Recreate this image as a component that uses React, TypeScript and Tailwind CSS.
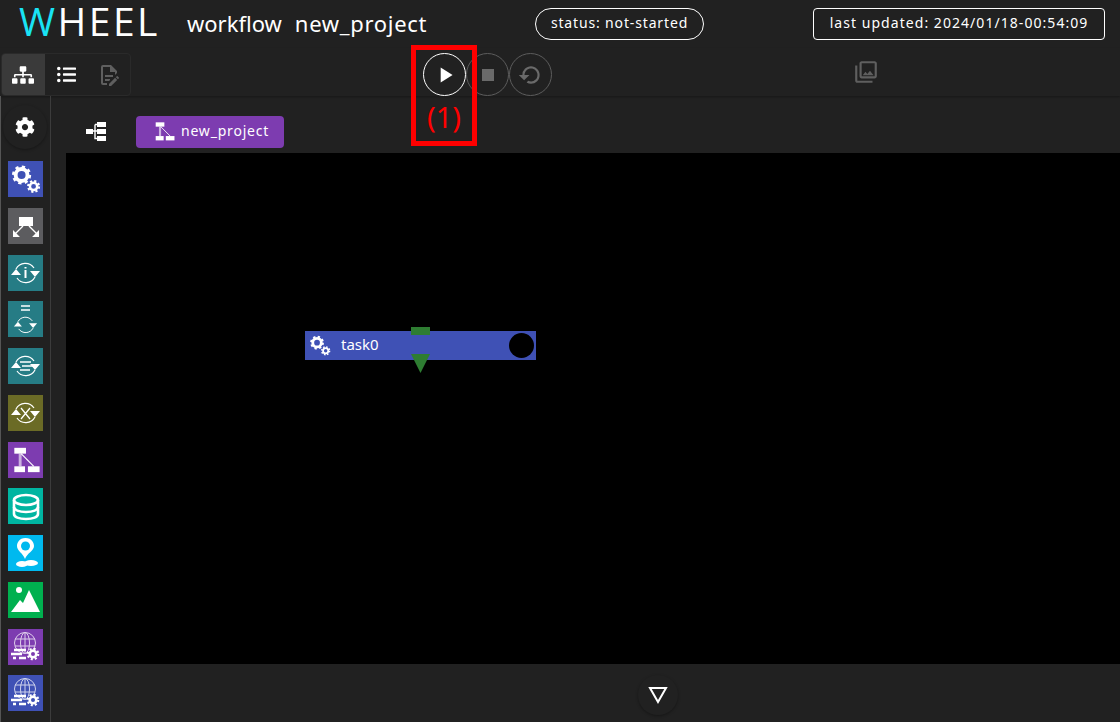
import { ReactNode } from "react"
import { FaSitemap, FaListUl, FaCog } from "react-icons/fa"
import { MdOutlinePhotoLibrary, MdRefresh, MdPlayArrow, MdStop } from "react-icons/md"

const Gears = ({ size = 32 }: { size?: number }) => (
  <svg width={size} height={size} viewBox="0 0 28 28" fill="none">
    <circle cx="11" cy="10.5" r="5.2" stroke="white" strokeWidth="3.4" />
    <circle cx="11" cy="10.5" r="7.2" stroke="white" strokeWidth="2.4" strokeDasharray="2.8 2.85" />
    <circle cx="21.5" cy="20.5" r="3.2" stroke="white" strokeWidth="2.2" />
    <circle cx="21.5" cy="20.5" r="4.8" stroke="white" strokeWidth="1.8" strokeDasharray="1.9 1.87" />
  </svg>
)

const Cycle = ({ children, small }: { children?: ReactNode; small?: boolean }) => (
  <svg width="35" height="36" viewBox="0 0 35 36" fill="none">
    <g transform={small ? "translate(3.5 9.5) scale(0.8)" : undefined}>
      <path d="M8 14 A10.5 10.5 0 0 1 26 13" stroke="white" strokeWidth="1.2" />
      <path d="M27 22 A10.5 10.5 0 0 1 9 23" stroke="white" strokeWidth="1.2" />
      <path d="M3 20 L8 14 L13 20 Z M22 16 L32 16 L27 22 Z" fill="white" />
    </g>
    {children}
  </svg>
)

const Fork = () => (
  <svg width="35" height="36" viewBox="0 0 35 36" fill="none">
    <rect x="11" y="9" width="14" height="9" fill="white" />
    <path d="M15 18 L6 27 M21 18 L30 27" stroke="white" strokeWidth="1.4" />
    <path d="M5 22 L5 29 L12 29 Z M31 22 L31 29 L24 29 Z" fill="white" />
  </svg>
)

const Workflow = ({ size = 35 }: { size?: number }) => (
  <svg width={size} height={size} viewBox="0 0 35 36" fill="none">
    <rect x="6" y="6" width="12" height="6" fill="white" />
    <rect x="6" y="25" width="11" height="6" fill="white" />
    <rect x="20" y="25" width="12" height="6" fill="white" />
    <path d="M12 12 V25" stroke="white" strokeOpacity="0.6" strokeWidth="3" />
    <path d="M13 12 L26 25" stroke="white" strokeWidth="1.2" />
  </svg>
)

const Database = () => (
  <svg width="35" height="36" viewBox="0 0 35 36" fill="none" stroke="white" strokeWidth="2.6">
    <ellipse cx="18" cy="12" rx="12" ry="5" />
    <path d="M6 12 V26 C6 29 11 31 18 31 C25 31 30 29 30 26 V12" />
    <path d="M6 19 C6 22 11 24 18 24 C25 24 30 22 30 19" />
  </svg>
)

const Pin = () => (
  <svg width="35" height="36" viewBox="0 0 35 36">
    <path d="M17.5 3 C11 3 9 8 9 11 C9 16 15 18 17 24 C19 18 26 16 26 11 C26 8 24 3 17.5 3 Z" fill="white" />
    <circle cx="17.5" cy="11" r="4.5" fill="#00b9ef" />
    <ellipse cx="14" cy="29" rx="6" ry="3" fill="white" />
    <ellipse cx="23" cy="28" rx="7" ry="3" fill="white" />
  </svg>
)

const Mountain = () => (
  <svg width="35" height="36" viewBox="0 0 35 36">
    <circle cx="11" cy="8" r="3" fill="white" />
    <path d="M3 30 L12 18 L15 21 L21 8 L32 30 Z" fill="white" />
  </svg>
)

const GlobeGear = () => (
  <svg width="35" height="36" viewBox="0 0 35 36" fill="none">
    <g stroke="white" strokeWidth="1" opacity="0.75">
      <circle cx="17" cy="14" r="10.5" />
      <ellipse cx="17" cy="14" rx="4.5" ry="10.5" />
      <path d="M17 3.5 V24.5 M7 10 H27 M7 17 H27" />
    </g>
    <path d="M6 21 H18 M3 25 H14 M5 29 H8 M11 29 H18" stroke="white" strokeWidth="2.4" />
    <circle cx="25" cy="25" r="3.3" stroke="white" strokeWidth="2.6" />
    <circle cx="25" cy="25" r="5.2" stroke="white" strokeWidth="2.2" strokeDasharray="2 2.08" />
  </svg>
)

const Tile = ({ color, children }: { color: string; children: ReactNode }) => (
  <div className={`flex h-9 w-[35px] items-center justify-center ${color}`}>{children}</div>
)

const RoundButton = ({ active, children }: { active?: boolean; children: ReactNode }) => (
  <div
    className={`flex h-[43px] w-[43px] items-center justify-center rounded-full border ${
      active ? "border-white text-white" : "border-[#5c5c5c] text-[#6a6a6a]"
    }`}
  >
    {children}
  </div>
)

export default function App() {
  return (
    <div className="relative flex h-[722px] w-[1120px] flex-col overflow-hidden bg-[#212121] font-['Noto_Sans',sans-serif] text-white">
      {/* title bar */}
      <header className="flex h-12 shrink-0 items-center">
        <div className="mb-[6px] ml-[19px] w-[168px] font-['Open_Sans',sans-serif] text-[39px] font-normal leading-[42px] tracking-[2.5px]">
          <span className="text-[#19e3f5]">W</span>
          HEEL
        </div>
        <div className="mb-[3px] flex w-[348px] gap-[13px] text-[22px] leading-[30px]">
          <span>workflow</span>
          <span className="tracking-[0.7px]">new_project</span>
        </div>
        <div className="flex h-8 w-[169px] items-center justify-center rounded-full border border-white pb-[3px] text-[14px] tracking-[0.85px]">
          status: not-started
        </div>
        <div className="ml-[109px] flex h-8 w-[292px] items-center justify-center rounded-[4px] border border-white pb-[3px] text-[14px] tracking-[1.05px]">
          last updated: 2024/01/18-00:54:09
        </div>
      </header>

      {/* toolbar */}
      <div className="flex h-12 shrink-0 items-end shadow-[0_1px_2px_rgba(0,0,0,0.3)]">
        <div className="ml-[1px] flex h-[43px] w-[130px] overflow-hidden rounded border border-[#2a2a2a]">
          <div className="flex w-[43px] items-center justify-center bg-[#3a3a3a]">
            <FaSitemap size={22} />
          </div>
          <div className="flex w-[43px] items-center justify-center">
            <FaListUl size={19} />
          </div>
          <div className="flex w-[43px] items-center justify-center text-[#5f5f5f]">
            <svg width="24" height="24" viewBox="0 0 24 24" fill="currentColor">
              <path d="M8,12H16V14H8V12M10,20H6V4H13V9H18V12.1L20,10.1V8L14,2H6A2,2 0 0,0 4,4V20A2,2 0 0,0 6,22H10V20M8,18H12.1L13,17.1V16H8V18M20.2,13C20.3,13 20.5,13.1 20.6,13.2L21.9,14.5C22.1,14.7 22.1,15.1 21.9,15.3L20.9,16.3L18.8,14.2L19.8,13.2C19.9,13.1 20,13 20.2,13M20.2,16.9L14.1,23H12V20.9L18.1,14.8L20.2,16.9Z" />
            </svg>
          </div>
        </div>
        <div className="ml-[292px] flex">
          <RoundButton active>
            <MdPlayArrow size={26} />
          </RoundButton>
          <RoundButton>
            <MdStop size={24} />
          </RoundButton>
          <RoundButton>
            <MdRefresh size={26} className="-scale-x-100 -rotate-45" />
          </RoundButton>
        </div>
        <div className="mb-[11px] ml-[301px] text-[#5f5f5f]">
          <MdOutlinePhotoLibrary size={26} />
        </div>
      </div>

      <div className="flex min-h-0 flex-1">
        {/* component library */}
        <aside className="flex w-[51px] shrink-0 flex-col items-center border-l border-r border-l-[#555] border-r-[#3c3c3c] pr-[1px]">
          <div className="mt-[9px] flex h-[44px] w-[44px] items-center justify-center rounded-full text-white shadow-[0_1px_3px_rgba(0,0,0,0.35)]">
            <FaCog size={20} />
          </div>
          <div className="mt-[12px] flex flex-col gap-[10.75px]">
            <Tile color="bg-[#3f51b5]"><Gears /></Tile>
            <Tile color="bg-[#5c5c5f]"><Fork /></Tile>
            <Tile color="bg-[#267c85]">
              <Cycle><path d="M17.5 12 V13.5 M17.5 15 V23" stroke="white" strokeWidth="2" /></Cycle>
            </Tile>
            <Tile color="bg-[#267c85]">
              <Cycle small><path d="M13 5 H22 M13 9 H22" stroke="white" strokeWidth="1.3" /></Cycle>
            </Tile>
            <Tile color="bg-[#267c85]">
              <Cycle><path d="M12 14 H23 M14 18 H25 M12 22 H22" stroke="white" strokeWidth="1.5" /></Cycle>
            </Tile>
            <Tile color="bg-[#6b6b26]">
              <Cycle><path d="M13 13 L22 24 M22 13 L13 24" stroke="white" strokeWidth="1.3" /></Cycle>
            </Tile>
            <Tile color="bg-[#7d3cb0]"><Workflow /></Tile>
            <Tile color="bg-[#00b5a1]"><Database /></Tile>
            <Tile color="bg-[#00b9ef]"><Pin /></Tile>
            <Tile color="bg-[#00b04f]"><Mountain /></Tile>
            <Tile color="bg-[#7d3cb0]"><GlobeGear /></Tile>
            <Tile color="bg-[#3f51b5]"><GlobeGear /></Tile>
          </div>
        </aside>

        <main className="flex min-w-0 flex-1 flex-col pl-[15px]">
          {/* breadcrumb */}
          <div className="flex h-[57px] shrink-0 items-start">
            <div className="ml-[19px] mt-[24px]">
              <svg width="22" height="22" viewBox="0 0 22 22" fill="white">
                <rect x="1" y="9" width="7" height="5" />
                <rect x="12" y="2" width="9" height="5" />
                <rect x="12" y="9" width="9" height="5" />
                <rect x="12" y="16" width="9" height="5" />
                <path d="M8 11 H12 M10 4.5 V18.5 H12 M10 4.5 H12" stroke="white" strokeWidth="1.4" fill="none" />
              </svg>
            </div>
            <div className="ml-[29px] mt-[20px] flex h-8 w-[148px] items-center rounded bg-[#7d3cb0] pb-[3px] text-[14px] tracking-[0.8px]">
              <span className="ml-[15px]"><Workflow size={26} /></span>
              <span className="ml-[4px]">new_project</span>
            </div>
          </div>

          {/* canvas */}
          <div className="relative h-[511px] bg-black">
            <div className="absolute left-[239px] top-[178px] flex h-[29px] w-[231px] items-center bg-[#3f51b5] text-[15px]">
              <span className="ml-[3px]"><Gears size={23} /></span>
              <span className="mb-[2px] ml-[10px]">task0</span>
              <span className="absolute right-[2px] top-[2px] h-[25px] w-[25px] rounded-full bg-black" />
            </div>
            <div className="absolute left-[345px] top-[174px] h-2 w-[19px] bg-[#2e7d32]" />
            <div className="absolute left-[345px] top-[201px] h-[19px] w-[19px] bg-[#2e7d32] [clip-path:polygon(0_0,100%_0,50%_100%)]" />
          </div>

          {/* log toggle */}
          <div className="flex flex-1 items-center pl-[572px]">
            <div className="mt-[3px] flex h-10 w-10 items-center justify-center rounded-full shadow-[0_1px_3px_rgba(0,0,0,0.35)]">
              <svg width="22" height="20" viewBox="0 0 22 20" fill="none">
                <path d="M3 3 H19 L11 17 Z" stroke="white" strokeWidth="2" />
              </svg>
            </div>
          </div>
        </main>
      </div>

      {/* annotation from the manual */}
      <div className="absolute left-[411px] top-[45px] flex h-[101px] w-[66px] items-end justify-center border-[5px] border-[#ff0000] pb-[10px] font-['Noto_Sans',sans-serif] text-[29px] leading-none text-[#ff0000]">
        (1)
      </div>
    </div>
  )
}
